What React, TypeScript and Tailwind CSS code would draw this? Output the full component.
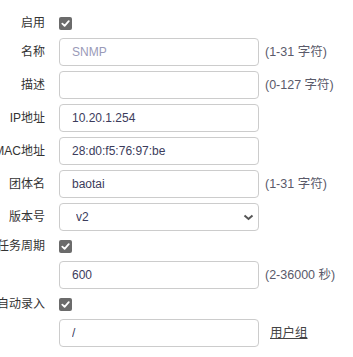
import { useState } from 'react'

const font = { fontFamily: '"Liberation Sans", "Noto Sans CJK SC", sans-serif' }

function Check({ on }: { on: boolean }) {
  return (
    <span className="flex h-[13px] w-[13px] items-center justify-center rounded-[2px] bg-[#6b6b6b]">
      {on && (
        <svg width="9" height="9" viewBox="0 0 10 10">
          <path d="M1.5 5.2 L4 7.6 L8.6 2.4" fill="none" stroke="#fff" strokeWidth="2" strokeLinecap="round" strokeLinejoin="round" />
        </svg>
      )}
    </span>
  )
}

function Row({ label, children, check }: { label?: string; children: React.ReactNode; check?: boolean }) {
  return (
    <div className={`flex items-center gap-[14px] ${check ? 'h-5' : 'h-7'}`}>
      <div className="flex w-[45px] shrink-0 justify-end whitespace-nowrap text-[12px] text-[#333]">{label}</div>
      {children}
    </div>
  )
}

function Field({ value, placeholder }: { value?: string; placeholder?: string }) {
  const [v, setV] = useState(value ?? '')
  return (
    <input
      className="h-7 w-[200px] rounded border border-[#cccccc] bg-white px-3 text-[12px] text-[#3c3c5c] placeholder:text-[#9a9ab8] focus:outline-none"
      value={v}
      placeholder={placeholder}
      onChange={(e) => setV(e.target.value)}
    />
  )
}

function Hint({ text }: { text: string }) {
  return <span className="ml-[-8px] whitespace-nowrap text-[12.5px] text-[#5a5a6a]">{text}</span>
}

export default function App() {
  return (
    <div className="flex min-h-screen flex-col gap-[5px] overflow-hidden bg-white pt-[13px]" style={font}>
      <Row label="启用" check>
        <Check on />
      </Row>
      <Row label="名称">
        <Field placeholder="SNMP" />
        <Hint text="(1-31 字符)" />
      </Row>
      <Row label="描述">
        <Field />
        <Hint text="(0-127 字符)" />
      </Row>
      <Row label="IP地址">
        <Field value="10.20.1.254" />
      </Row>
      <Row label="MAC地址">
        <Field value="28:d0:f5:76:97:be" />
      </Row>
      <Row label="团体名">
        <Field value="baotai" />
        <Hint text="(1-31 字符)" />
      </Row>
      <Row label="版本号">
        <div className="relative h-7 w-[200px]">
          <select className="h-7 w-full appearance-none rounded border border-[#cccccc] bg-white pl-4 text-[12px] text-[#3c3c5c] focus:outline-none">
            <option>v2</option>
            <option>v3</option>
          </select>
          <svg className="pointer-events-none absolute right-[5px] top-[11px]" width="11" height="7" viewBox="0 0 11 7">
            <path d="M1.5 1.5 L5.5 5 L9.5 1.5" fill="none" stroke="#555" strokeWidth="2" />
          </svg>
        </div>
      </Row>
      <Row label="任务周期" check>
        <Check on />
      </Row>
      <Row>
        <Field value="600" />
        <Hint text="(2-36000 秒)" />
      </Row>
      <Row label="自动录入" check>
        <Check on />
      </Row>
      <Row>
        <Field value="/" />
        <a href="#" className="ml-[-3px] whitespace-nowrap text-[12.5px] text-[#444] underline">用户组</a>
      </Row>
    </div>
  )
}
